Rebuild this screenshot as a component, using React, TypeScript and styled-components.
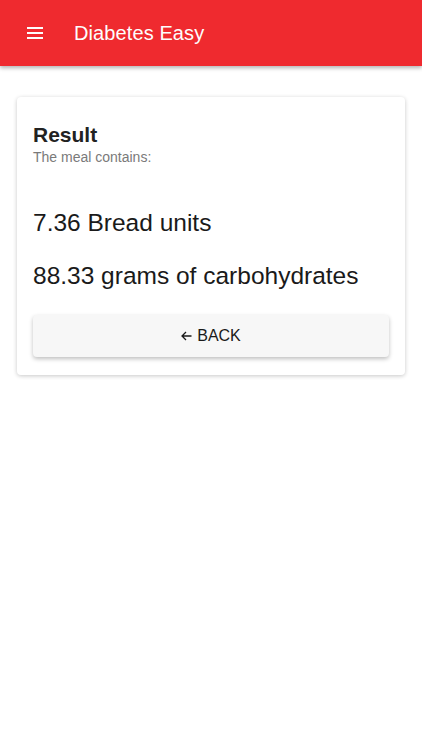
import { FC } from 'react'
import styled, { createGlobalStyle } from 'styled-components'

const GlobalStyle = createGlobalStyle`
  html, body {
    margin: 0;
    padding: 0;
    background: #FFFFFF;
    font-family: 'Liberation Sans', Arial, sans-serif;
  }
`

const Page = styled.div`
  display: flex;
  flex-direction: column;
  width: 422px;
  min-height: 750px;
  background: #FFFFFF;
`
const Header = styled.header`
  display: flex;
  align-items: center;
  box-sizing: border-box;
  height: 66px;
  padding: 0 0 0 27px;
  background: #EF2A2F;
  box-shadow: 0 2px 4px rgba(0, 0, 0, 0.3);
  position: relative;
  z-index: 1;
`
const MenuButton = styled.button`
  display: flex;
  align-items: center;
  padding: 0;
  margin: 0 31px 0 0;
  border: none;
  background: transparent;
`
const Title = styled.h1`
  margin: 0;
  font-size: 20px;
  font-weight: 400;
  color: #FDFDFD;
  letter-spacing: 0.1px;
`
const Content = styled.main`
  padding: 31px 17px;
`
const Card = styled.section`
  display: flex;
  flex-direction: column;
  box-sizing: border-box;
  padding: 24px 16px 18px;
  background: #FFFFFF;
  border-radius: 4px;
  box-shadow: 0 1px 4px rgba(0, 0, 0, 0.22);
`
const CardTitle = styled.h2`
  margin: 0;
  font-size: 21px;
  line-height: 28px;
  font-weight: 700;
  color: #222222;
`
const Subtitle = styled.p`
  margin: 0;
  font-size: 14px;
  line-height: 16px;
  color: #7A7A7A;
`
const Amount = styled.p<{ top: number }>`
  margin: ${p => p.top}px 0 0;
  font-size: 24.5px;
  line-height: 30px;
  color: #1A1A1A;
`
const BackButton = styled.button`
  display: flex;
  align-items: center;
  justify-content: center;
  gap: 5px;
  height: 42px;
  margin-top: 24px;
  border: none;
  border-radius: 4px;
  background: #F7F7F7;
  box-shadow: 0 2px 4px rgba(0, 0, 0, 0.25);
  font-family: inherit;
  font-size: 16px;
  color: #1A1A1A;
  cursor: pointer;
`

const MenuIcon: FC = () => (
  <svg width="16" height="12" viewBox="0 0 16 12" fill="none">
    <path d="M0 1h16M0 6h16M0 11h16" stroke="#FDFDFD" strokeWidth="2" />
  </svg>
)

const ArrowIcon: FC = () => (
  <svg width="11" height="10" viewBox="0 0 11 10" fill="none">
    <path d="M10.5 5H1M5 1L1 5l4 4" stroke="#1A1A1A" strokeWidth="1.3" />
  </svg>
)

const App: FC = () => {
  return (
    <Page>
      <GlobalStyle />
      <Header>
        <MenuButton aria-label="menu">
          <MenuIcon />
        </MenuButton>
        <Title>Diabetes Easy</Title>
      </Header>
      <Content>
        <Card>
          <CardTitle>Result</CardTitle>
          <Subtitle>The meal contains:</Subtitle>
          <Amount top={43}>7.36 Bread units</Amount>
          <Amount top={23}>88.33 grams of carbohydrates</Amount>
          <BackButton>
            <ArrowIcon />
            BACK
          </BackButton>
        </Card>
      </Content>
    </Page>
  )
}

export default App
